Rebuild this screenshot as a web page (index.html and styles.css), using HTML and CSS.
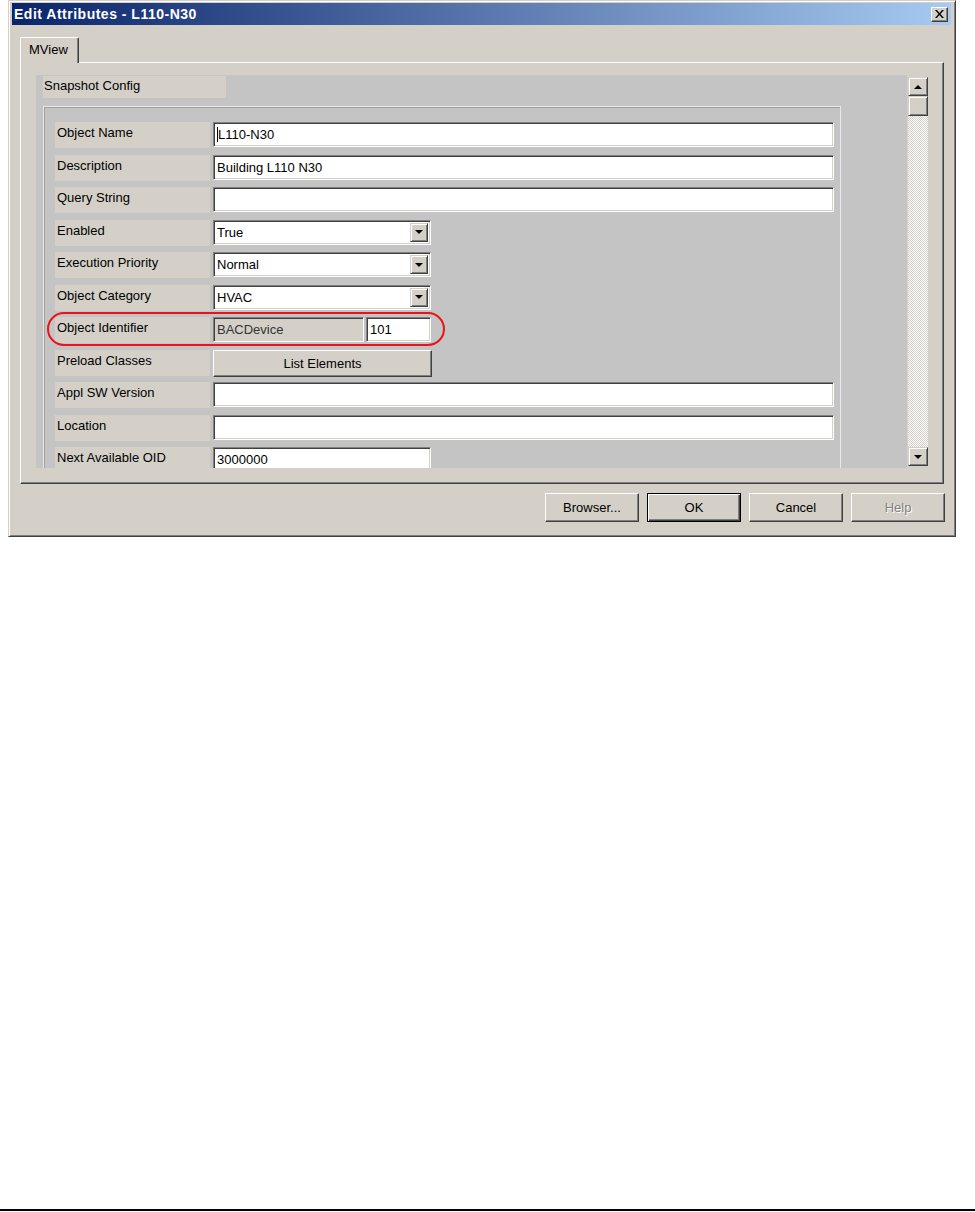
FILE: index.html
```html
<!DOCTYPE html>
<html lang="en">
<head>
    <meta charset="UTF-8" />
    <title>Edit Attributes - L110-N30</title>
    <link rel="stylesheet" href="styles.css">
</head>
<body>

<div class="window">
    <div class="titlebar">
        <span class="title">Edit Attributes - L110-N30</span>
        <span class="close">
            <svg width="9" height="8" viewBox="0 0 9 8"><path d="M0 0h2l2.5 3 2.5-3h2L5.5 4 9 8H7L4.5 5 2 8H0l3.5-4z" fill="#000"/></svg>
        </span>
    </div>

    <div class="tabs">
        <div class="tab">MView</div>
    </div>

    <div class="panel">
        <div class="scrollbox">
            <div class="viewport">
                <div class="section-head">Snapshot Config</div>

                <div class="group">
                    <div class="row">
                        <div class="label">Object Name</div>
                        <div class="field wide"><span class="caret"></span>L110-N30</div>
                    </div>
                    <div class="row">
                        <div class="label">Description</div>
                        <div class="field wide">Building L110 N30</div>
                    </div>
                    <div class="row">
                        <div class="label">Query String</div>
                        <div class="field wide"></div>
                    </div>
                    <div class="row">
                        <div class="label">Enabled</div>
                        <div class="field combo">True<span class="drop"><i></i></span></div>
                    </div>
                    <div class="row">
                        <div class="label">Execution Priority</div>
                        <div class="field combo">Normal<span class="drop"><i></i></span></div>
                    </div>
                    <div class="row">
                        <div class="label">Object Category</div>
                        <div class="field combo">HVAC<span class="drop"><i></i></span></div>
                    </div>
                    <div class="row marked">
                        <div class="label">Object Identifier</div>
                        <div class="field readonly">BACDevice</div>
                        <div class="field num">101</div>
                        <div class="ring"></div>
                    </div>
                    <div class="row">
                        <div class="label">Preload Classes</div>
                        <div class="btn list-btn">List Elements</div>
                    </div>
                    <div class="row">
                        <div class="label">Appl SW Version</div>
                        <div class="field wide"></div>
                    </div>
                    <div class="row">
                        <div class="label">Location</div>
                        <div class="field wide"></div>
                    </div>
                    <div class="row">
                        <div class="label">Next Available OID</div>
                        <div class="field combo">3000000</div>
                    </div>
                </div>
            </div>

            <div class="scrollbar">
                <div class="arrow"><i class="up"></i></div>
                <div class="thumb"></div>
                <div class="track"></div>
                <div class="arrow"><i class="down"></i></div>
            </div>
        </div>
    </div>

    <div class="actions">
        <div class="btn">Browser...</div>
        <div class="btn default">OK</div>
        <div class="btn">Cancel</div>
        <div class="btn disabled">Help</div>
    </div>
</div>

<div class="rule"></div>

</body>
</html>
```

FILE: styles.css
```css
:root {
    --face: #d4d0c8;
    --well: #c4c4c4;
    --shadow: #808080;
    --dark: #404040;
}

* {
    box-sizing: border-box;
    margin: 0;
    padding: 0;
}

body {
    background: #fff;
    font-family: "Liberation Sans", Arial, sans-serif;
    font-size: 13px;
    color: #000;
}

/* =========================
   WINDOW FRAME
========================= */
.window {
    width: 948px;
    height: 537px;
    margin-left: 8px;
    background: var(--face);
    border: 1px solid;
    border-color: var(--face) var(--dark) var(--dark) var(--face);
    box-shadow: inset 1px 1px #fff, inset -1px -1px var(--shadow);
    padding: 2px 4px 0 3px;
    display: flex;
    flex-direction: column;
}

.titlebar {
    height: 22px;
    background: linear-gradient(to right, #0a246a, #a6caf0);
    display: flex;
    align-items: center;
    justify-content: space-between;
    padding: 0 3px 0 2px;
}

.title {
    color: #fff;
    font-weight: bold;
    font-size: 14px;
    letter-spacing: 0.5px;
}

.close {
    width: 17px;
    height: 15px;
    background: var(--face);
    border: 1px solid;
    border-color: #fff var(--dark) var(--dark) #fff;
    box-shadow: inset -1px -1px var(--shadow);
    display: flex;
    align-items: center;
    justify-content: center;
}

/* =========================
   TAB + PANEL
========================= */
.tabs {
    display: flex;
    margin: 12px 0 0 8px;
    height: 25px;
}

.tab {
    width: 59px;
    height: 26px;
    padding: 4px 0 0 8px;
    background: var(--face);
    border-top: 1px solid #fff;
    border-left: 1px solid #fff;
    border-right: 1px solid var(--dark);
    box-shadow: inset -1px 0 var(--shadow);
    border-radius: 2px 2px 0 0;
    position: relative;
    z-index: 1;
}

.panel {
    margin: 0 7px 0 8px;
    height: 422px;
    border: 1px solid;
    border-color: #fff var(--dark) var(--dark) #fff;
    box-shadow: inset -1px -1px var(--shadow);
    padding: 12px 14px 14px 15px;
}

.scrollbox {
    height: 393px;
    display: flex;
}

.viewport {
    flex: 1;
    background: var(--well);
    overflow: hidden;
    padding: 1px 0 0 7px;
}

.section-head {
    width: 183px;
    height: 22px;
    background: var(--face);
    padding: 2px 0 0 1px;
}

.group {
    width: 798px;
    margin-top: 8px;
    height: 400px;
    border: 1px solid #e8e8e8;
    box-shadow: inset 1px 1px #a0a0a0;
    padding: 15px 6px 0 11px;
}

/* =========================
   FORM ROWS
========================= */
.row {
    display: flex;
    height: 26px;
    margin-bottom: 6.5px;
    position: relative;
}

.label {
    width: 155px;
    margin-right: 3px;
    background: var(--face);
    padding: 3px 0 0 2px;
    line-height: 16px;
}

.field {
    height: 25px;
    background: #fff;
    border: 1px solid;
    border-color: var(--shadow) #fff #fff var(--shadow);
    box-shadow: inset 1px 1px var(--dark), inset -1px -1px var(--face);
    padding: 0 0 0 3px;
    line-height: 24px;
    position: relative;
    white-space: nowrap;
}

.wide { width: 621px; }
.combo { width: 218px; }

.caret {
    display: inline-block;
    width: 1px;
    height: 15px;
    background: #000;
    vertical-align: -3px;
}

.drop {
    position: absolute;
    right: 2px;
    top: 2px;
    width: 18px;
    height: 19px;
    background: var(--face);
    border: 1px solid;
    border-color: var(--face) var(--dark) var(--dark) var(--face);
    box-shadow: inset 1px 1px #fff, inset -1px -1px var(--shadow);
    display: flex;
    align-items: center;
    justify-content: center;
}

.drop i,
.arrow i {
    width: 0;
    height: 0;
    border-left: 4px solid transparent;
    border-right: 4px solid transparent;
    border-top: 4px solid #000;
}

.arrow i.up {
    border-top: 0;
    border-bottom: 4px solid #000;
}

.readonly {
    width: 151px;
    background: var(--face);
    color: #333;
}

.num {
    width: 65px;
    margin-left: 2px;
}

.ring {
    position: absolute;
    left: -8px;
    top: -5px;
    width: 398px;
    height: 34px;
    border: 2px solid #e8141a;
    border-radius: 17px;
    pointer-events: none;
}

/* =========================
   BUTTONS
========================= */
.btn {
    background: var(--face);
    border: 1px solid;
    border-color: #fff var(--dark) var(--dark) #fff;
    box-shadow: inset -1px -1px var(--shadow), inset 1px 1px var(--face);
    display: flex;
    align-items: center;
    justify-content: center;
}

.list-btn {
    width: 219px;
    height: 27px;
}

.actions {
    display: flex;
    justify-content: flex-end;
    gap: 8px;
    margin: 9px 6px 0 0;
}

.actions .btn {
    width: 94px;
    height: 29px;
}

.actions .default {
    border: 1px solid #000;
    box-shadow: inset 1px 1px #fff, inset -1px -1px var(--dark), inset -2px -2px var(--shadow);
}

.actions .disabled {
    color: var(--shadow);
    text-shadow: 1px 1px #fff;
}

/* =========================
   SCROLLBAR
========================= */
.scrollbar {
    width: 20px;
    margin: 2px 1px 2px 1px;
    display: flex;
    flex-direction: column;
}

.arrow,
.thumb {
    height: 19px;
    background: var(--face);
    border: 1px solid;
    border-color: var(--face) var(--dark) var(--dark) var(--face);
    box-shadow: inset 1px 1px #fff, inset -1px -1px var(--shadow);
    display: flex;
    align-items: center;
    justify-content: center;
}

.thumb { height: 20px; }

.track {
    flex: 1;
    background: repeating-conic-gradient(#fff 0 25%, var(--face) 0 50%) 0 0 / 2px 2px;
}

.rule {
    height: 2px;
    background: #000;
    margin-top: 672px;
}
```
